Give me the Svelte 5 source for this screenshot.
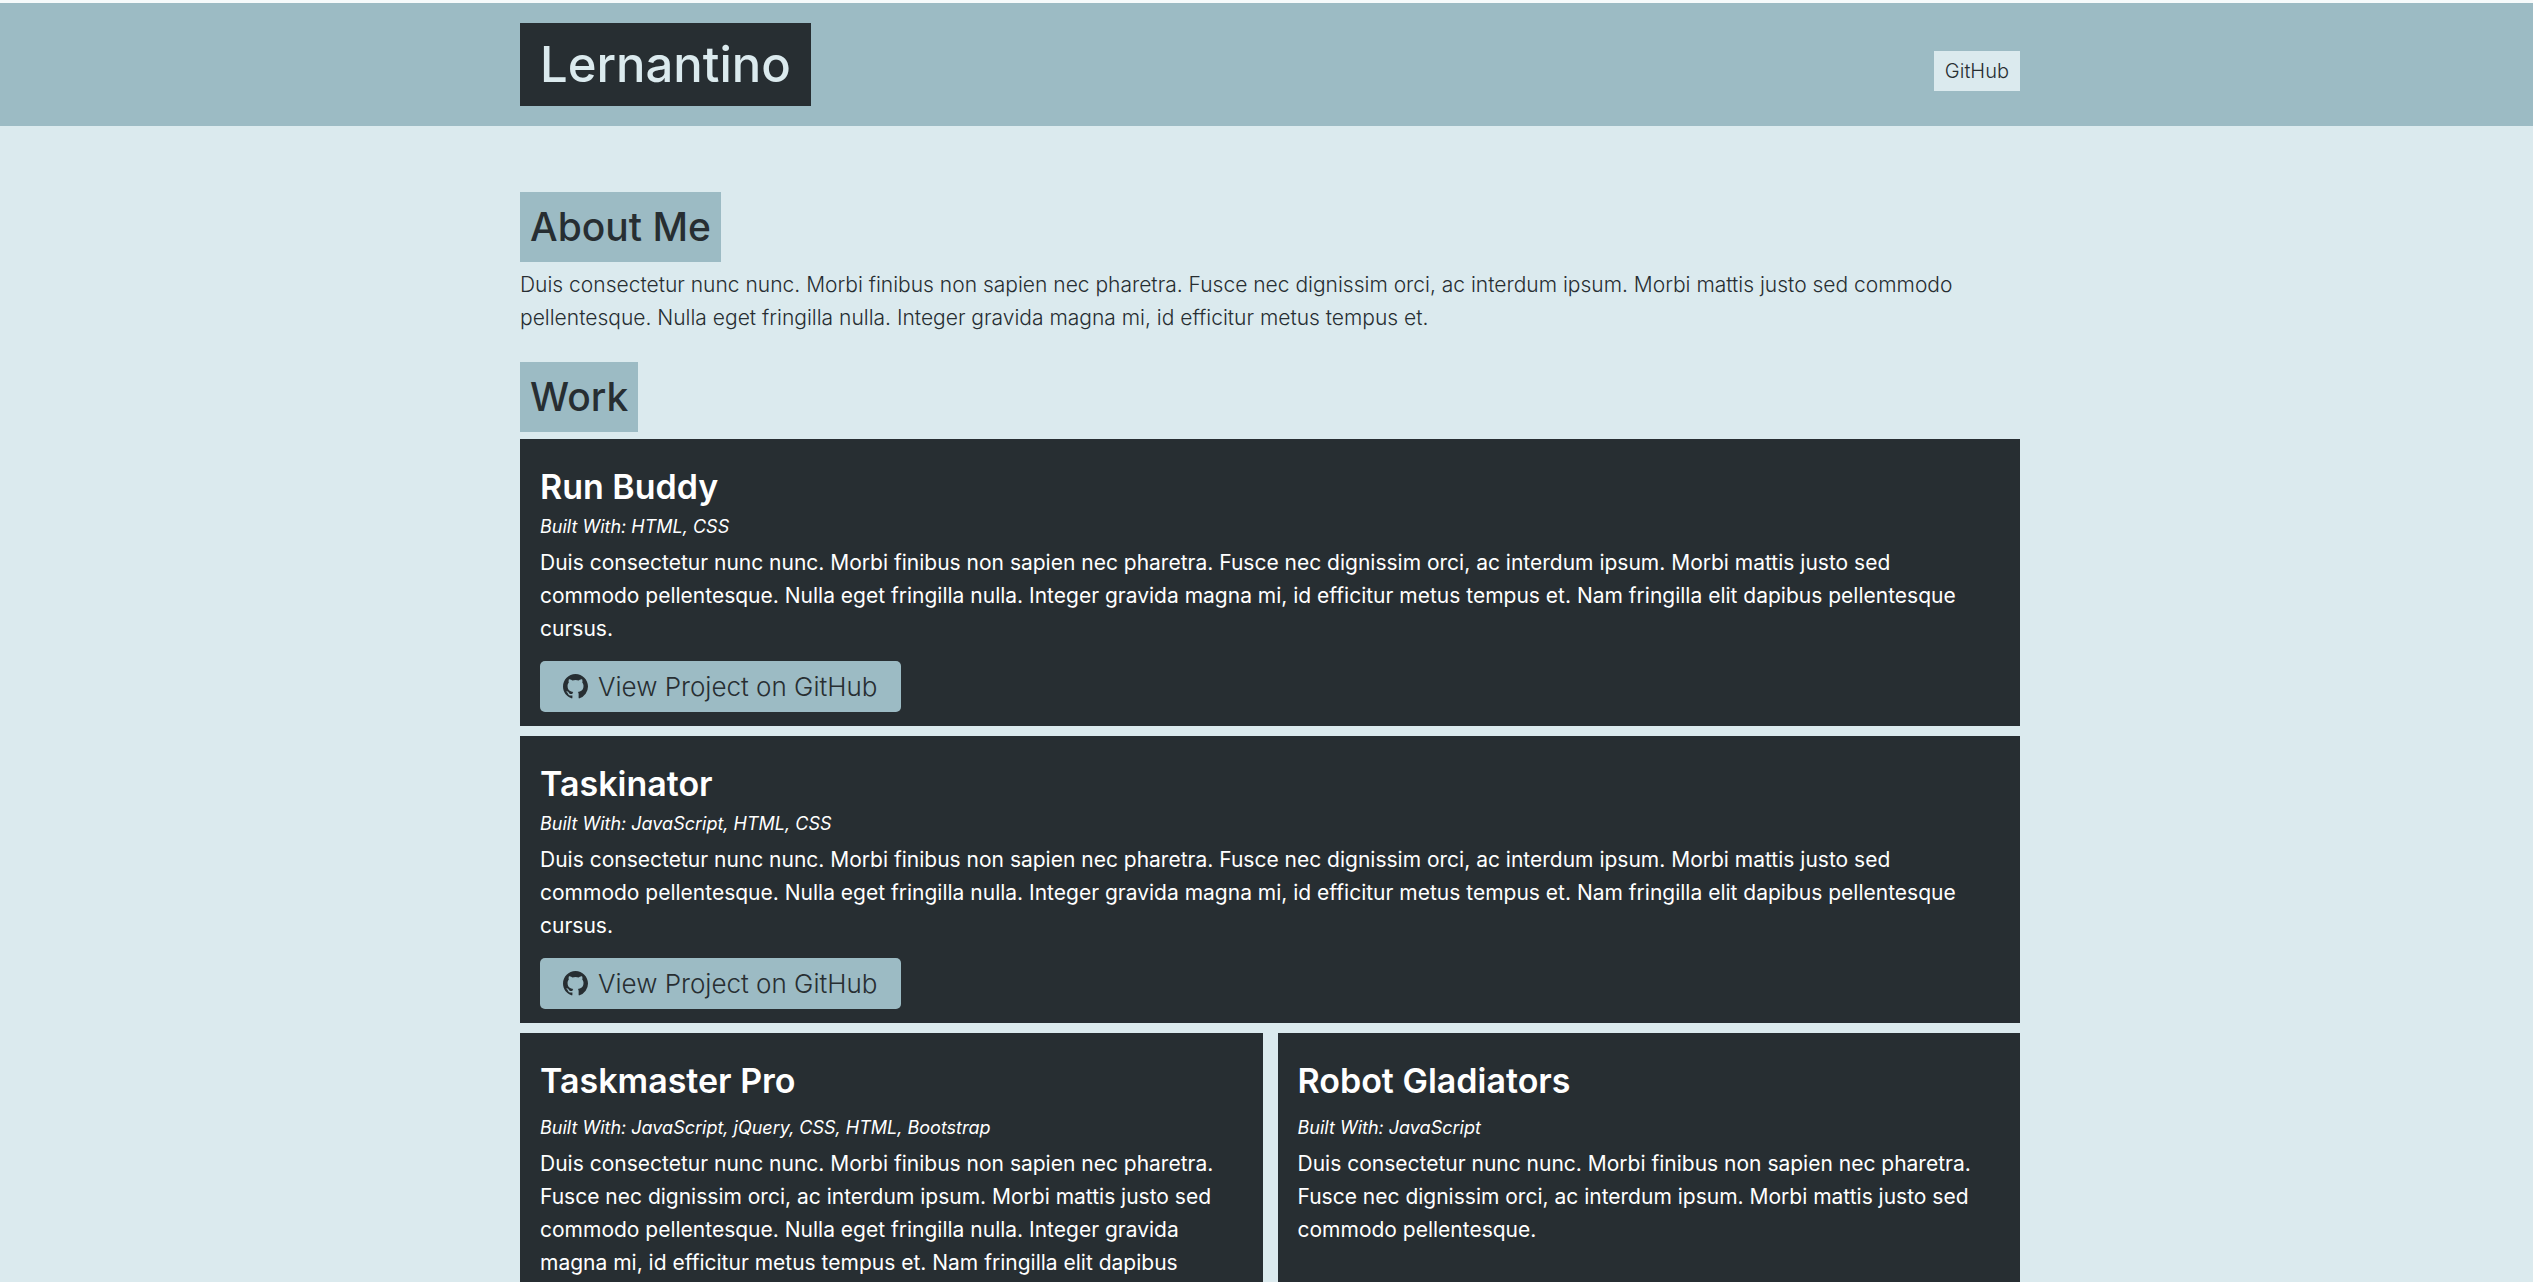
<script>
  const intro =
    'Duis consectetur nunc nunc. Morbi finibus non sapien nec pharetra. Fusce nec dignissim orci, ac interdum ipsum. Morbi mattis justo sed commodo pellentesque. Nulla eget fringilla nulla. Integer gravida magna mi, id efficitur metus tempus et.';
  const full = intro + ' Nam fringilla elit dapibus pellentesque cursus.';
  const brief =
    'Duis consectetur nunc nunc. Morbi finibus non sapien nec pharetra. Fusce nec dignissim orci, ac interdum ipsum. Morbi mattis justo sed commodo pellentesque.';

  const projects = [
    { name: 'Run Buddy', tools: 'HTML, CSS', text: full, wide: true },
    { name: 'Taskinator', tools: 'JavaScript, HTML, CSS', text: full, wide: true },
    { name: 'Taskmaster Pro', tools: 'JavaScript, jQuery, CSS, HTML, Bootstrap', text: full, wide: false },
    { name: 'Robot Gladiators', tools: 'JavaScript', text: brief, wide: false }
  ];
</script>

<div class="page">
  <header>
    <div class="shell bar">
      <h1>Lernantino</h1>
      <nav><a class="nav-link" href="#github">GitHub</a></nav>
    </div>
  </header>

  <main class="shell">
    <section class="about">
      <h2>About Me</h2>
      <p>{intro}</p>
    </section>

    <section>
      <h2>Work</h2>
      <div class="projects">
        {#each projects as project}
          <article class:wide={project.wide}>
            <h3>{project.name}</h3>
            <h4>Built With: {project.tools}</h4>
            <p>{project.text}</p>
            {#if project.wide}
              <a class="button" href="#project">
                <svg viewBox="0 0 16 16" aria-hidden="true">
                  <path d="M8 0C3.58 0 0 3.58 0 8c0 3.54 2.29 6.53 5.47 7.59.4.07.55-.17.55-.38 0-.19-.01-.82-.01-1.49-2.01.37-2.53-.49-2.69-.94-.09-.23-.48-.94-.82-1.13-.28-.15-.68-.52-.01-.53.63-.01 1.08.58 1.23.82.72 1.21 1.87.87 2.33.66.07-.52.28-.87.51-1.07-1.78-.2-3.64-.89-3.64-3.95 0-.87.31-1.59.82-2.15-.08-.2-.36-1.02.08-2.12 0 0 .67-.21 2.2.82a7.6 7.6 0 0 1 4 0c1.53-1.04 2.2-.82 2.2-.82.44 1.1.16 1.92.08 2.12.51.56.82 1.27.82 2.15 0 3.07-1.87 3.75-3.65 3.95.29.25.54.73.54 1.48 0 1.07-.01 1.93-.01 2.2 0 .21.15.46.55.38A8.01 8.01 0 0 0 16 8c0-4.42-3.58-8-8-8z" />
                </svg>
                View Project on GitHub
              </a>
            {/if}
          </article>
        {/each}
      </div>
    </section>
  </main>
</div>

<style>
  :global(body) {
    background: #dbeaee;
  }
  .page {
    font-family: Inter, sans-serif;
    font-size: 21px;
    line-height: 33px;
    font-weight: 300;
    color: #272e32;
    border-top: 3px solid #f6fafb;
  }
  h1, h2, h3, h4, p {
    margin: 0;
  }
  header {
    background: #9cbbc4;
    padding: 20px 0;
  }
  header,
  main {
    padding-left: 7px;
  }
  .shell {
    max-width: 1500px;
    margin: 0 auto;
  }
  main.shell {
    padding-top: 66px;
  }
  .bar {
    display: flex;
    justify-content: space-between;
    align-items: center;
  }
  h1 {
    background: #272e32;
    color: #dbeaee;
    font-size: 49px;
    line-height: 83px;
    font-weight: 500;
    padding: 0 20px;
  }
  nav {
    padding-top: 12px;
  }
  .nav-link {
    display: block;
    background: #dbeaee;
    color: #272e32;
    font-size: 20px;
    line-height: 40px;
    padding: 0 11px;
    text-decoration: none;
  }
  h2 {
    width: fit-content;
    background: #9cbbc4;
    font-size: 39px;
    line-height: 70px;
    font-weight: 500;
    padding: 0 10px;
  }
  .about {
    padding-bottom: 28px;
  }
  .about h2 {
    margin-bottom: 6px;
  }
  .projects {
    display: grid;
    grid-template-columns: 1fr 1fr;
    gap: 10px 15px;
    margin-top: 7px;
  }
  article {
    background: #272e32;
    color: #fff;
    padding: 27px 28px 14px 20px;
    font-weight: 400;
  }
  .wide {
    grid-column: 1 / -1;
  }
  h3 {
    font-size: 34px;
    line-height: 42px;
    font-weight: 600;
  }
  h4 {
    font-size: 18px;
    line-height: 38px;
    font-weight: 400;
    font-style: italic;
  }
  article:not(.wide) h3 {
    margin-bottom: 7px;
  }
  .button {
    display: flex;
    align-items: center;
    gap: 10px;
    width: fit-content;
    margin-top: 16px;
    padding: 0 23px;
    background: #9cbbc4;
    color: #272e32;
    border-radius: 5px;
    font-size: 26px;
    line-height: 51px;
    font-weight: 300;
    text-decoration: none;
  }
  svg {
    width: 25px;
    height: 25px;
    fill: currentColor;
  }
</style>
